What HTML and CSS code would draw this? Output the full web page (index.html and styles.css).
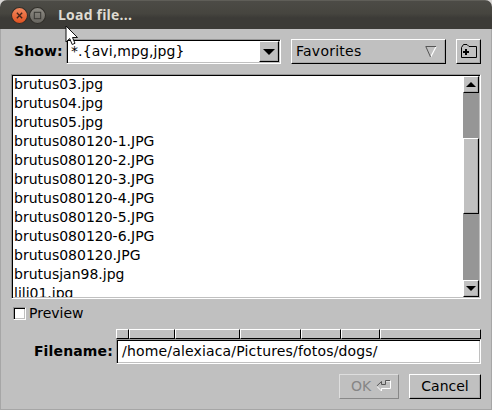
FILE: index.html
```html
<!DOCTYPE html>
<html lang="en">
<head>
<meta charset="utf-8">
<title>Load file...</title>
<link rel="stylesheet" href="styles.css">
</head>
<body>
<div class="window">
  <header class="titlebar">
    <svg class="control" viewBox="0 0 16 16"><defs><linearGradient id="o" x1="0" y1="0" x2="0" y2="1"><stop offset="0" stop-color="#f58a60"/><stop offset="1" stop-color="#e0511f"/></linearGradient></defs><circle cx="8" cy="8" r="7.5" fill="url(#o)" stroke="#302e29"/><path d="M5.5 5.5l5 5m0-5l-5 5" stroke="#43241a" stroke-width="1.3"/></svg>
    <svg class="control" viewBox="0 0 16 16"><defs><linearGradient id="g" x1="0" y1="0" x2="0" y2="1"><stop offset="0" stop-color="#8f8d86"/><stop offset="1" stop-color="#66645e"/></linearGradient></defs><circle cx="8" cy="8" r="7.5" fill="url(#g)" stroke="#302e29"/><rect x="5" y="5" width="6" height="6" fill="none" stroke="#3c3b37"/></svg>
    <h1>Load file...</h1>
  </header>
  <main class="content">
    <div class="toolbar">
      <label class="caption">Show:</label>
      <div class="sunken combo"><span>*.{avi,mpg,jpg}</span><div class="raised drop"><svg width="12" height="6" viewBox="0 0 12 6"><path d="M0 0h12L6 6z"/></svg></div></div>
      <div class="raised favorites"><span>Favorites</span><svg width="12" height="12" viewBox="0 0 12 12"><path d="M11 .8L5.7 11" stroke="#fff" stroke-width="1.2"/><path d="M11 .5H.8L5.5 11" fill="none" stroke="#555"/></svg></div>
      <div class="raised add"><svg width="17" height="15" viewBox="0 0 17 15"><path d="M1.5 13.500V3.500L3.500 .5H7l2 2h7.500v11z" fill="none" stroke="#000"/><path d="M3 8h6M6 5v6" stroke="#000" stroke-width="2"/></svg></div>
    </div>
    <div class="sunken browser">
      <ul class="files">
        <li>brutus03.jpg</li><li>brutus04.jpg</li><li>brutus05.jpg</li><li>brutus080120-1.JPG</li><li>brutus080120-2.JPG</li><li>brutus080120-3.JPG</li><li>brutus080120-4.JPG</li><li>brutus080120-5.JPG</li><li>brutus080120-6.JPG</li><li>brutus080120.JPG</li><li>brutusjan98.jpg</li><li>lili01.jpg</li>
      </ul>
      <div class="scrollbar">
        <div class="raised arrow"><svg width="10" height="5" viewBox="0 0 10 5"><path d="M0 5h10L5 0z"/></svg></div>
        <div class="track"><div class="raised thumb"></div></div>
        <div class="raised arrow"><svg width="10" height="5" viewBox="0 0 10 5"><path d="M0 0h10L5 5z"/></svg></div>
      </div>
    </div>
    <div class="preview"><span class="sunken check"></span><span>Preview</span></div>
    <div class="filename">
      <label class="caption">Filename:</label>
      <div class="entry">
        <div class="segments"><i></i><i></i><i></i><i></i><i></i><i></i><i></i></div>
        <div class="sunken path">/home/alexiaca/Pictures/fotos/dogs/</div>
      </div>
    </div>
    <div class="actions">
      <div class="raised ok"><span>OK</span><svg width="16" height="12" viewBox="0 0 16 12"><path d="M5.500 11V8.500H14.500V1H10" fill="none" stroke="#fff"/><path d="M5.500 11L.8 6.300" fill="none" stroke="#fff"/><path d="M.8 6L5.500 1.500V4.500H9.500V.5H14" fill="none" stroke="#555"/></svg></div>
      <div class="raised cancel">Cancel</div>
    </div>
  </main>
</div>
<svg class="pointer" width="14" height="22" viewBox="0 0 14 22"><path d="M1 1v16l3.700-3.500 2.500 6 2.800-1.200-2.500-5.800H12.500z" fill="#fff" stroke="#111"/></svg>
</body>
</html>
```
FILE: styles.css
```css
* { box-sizing: border-box; }
body {
  margin: 0;
  background: #d8d6d4;
  font: 14px/18px "DejaVu Sans", sans-serif;
  color: #000;
}
svg { display: block; flex: none; }
.window {
  width: 492px;
  height: 410px;
  border-radius: 7px 7px 0 0;
  overflow: hidden;
  background: #c0c0c0;
}
.titlebar {
  height: 29px;
  display: flex;
  align-items: center;
  padding-left: 11px;
  background: linear-gradient(#4c4b46, #46453f 45%, #3c3b37 60%, #3c3b37);
  border-top: 1px solid #5f5e58;
}
.control { width: 17px; height: 17px; margin-right: 1px; }
.titlebar h1 {
  margin: 0 0 0 11px;
  font: bold 14px/20px "Open Sans", sans-serif;
  letter-spacing: .2px;
  color: #dfdbd2;
}
.content {
  height: 381px;
  padding: 10px 10px 0;
  border: solid #a6a6a6;
  border-width: 0 1px 1px;
}
.caption { font-weight: bold; }
.raised {
  background: #c0c0c0;
  border: 1px solid;
  border-color: #fff #000 #000 #fff;
  box-shadow: inset -1px -1px #a8a8a8;
}
.sunken {
  background: #fff;
  border: 1px solid;
  border-color: #969696 #fff #fff #969696;
  box-shadow: inset 1px 1px #000, inset -1px -1px #c0c0c0;
}
.toolbar { display: flex; height: 25px; align-items: center; }
.toolbar .caption { width: 55px; padding: 0 0 2px 3px; letter-spacing: .1px; }
.combo {
  width: 215px;
  height: 25px;
  display: flex;
  justify-content: space-between;
  align-items: center;
  padding: 1px 1px 1px 4px;
}
.combo span, .favorites span { padding-bottom: 1px; letter-spacing: .1px; }
.favorites span { letter-spacing: .25px; }
.drop {
  width: 20px;
  height: 21px;
  display: grid;
  place-items: center;
}
.favorites {
  width: 155px;
  height: 25px;
  margin: 0 10px;
  padding: 0 8px 0 4px;
  display: flex;
  align-items: center;
  justify-content: space-between;
}
.add { width: 25px; height: 25px; display: grid; place-items: center; }
.browser {
  width: 470px;
  height: 225px;
  margin-top: 10px;
  padding: 1px;
  display: flex;
}
.files {
  flex: 1;
  margin: 0;
  padding: 0 0 0 1px;
  list-style: none;
  line-height: 19px;
  overflow: hidden;
}
.files li { height: 19px; }
.files li:first-child { margin-top: -1px; }
.scrollbar { width: 16px; display: flex; flex-direction: column; }
.arrow { height: 17px; display: grid; place-items: center; }
.track { flex: 1; background: #969696; padding-top: 45px; }
.thumb { height: 76px; }
.preview {
  height: 18px;
  margin: 5px 0 0 2px;
  display: flex;
  align-items: center;
  gap: 3px;
}
.check { width: 13px; height: 13px; }
.filename { display: flex; margin-top: 7px; }
.filename .caption { width: 105px; padding: 13px 3px 0 0; text-align: right; letter-spacing: .15px; }
.entry { width: 365px; }
.segments {
  height: 10px;
  display: grid;
  grid-template-columns: 13px 46px 65px 61px 40px 39px 101px;
}
.segments i {
  border: 1px solid;
  border-color: #fff #000 #000 #fff;
}
.path { height: 25px; padding: 2px 0 0 5px; letter-spacing: .17px; }
.actions { display: flex; justify-content: flex-end; gap: 10px; margin-top: 10px; }
.ok, .cancel { height: 25px; display: flex; align-items: center; justify-content: center; padding-bottom: 1px; }
.ok {
  width: 60px;
  gap: 5px;
  padding-left: 5px;
  color: #868686;
  border-color: #dedede #888 #888 #dedede;
  box-shadow: none;
}
.cancel { width: 72px; }
.pointer { position: absolute; left: 65px; top: 25px; }
```
